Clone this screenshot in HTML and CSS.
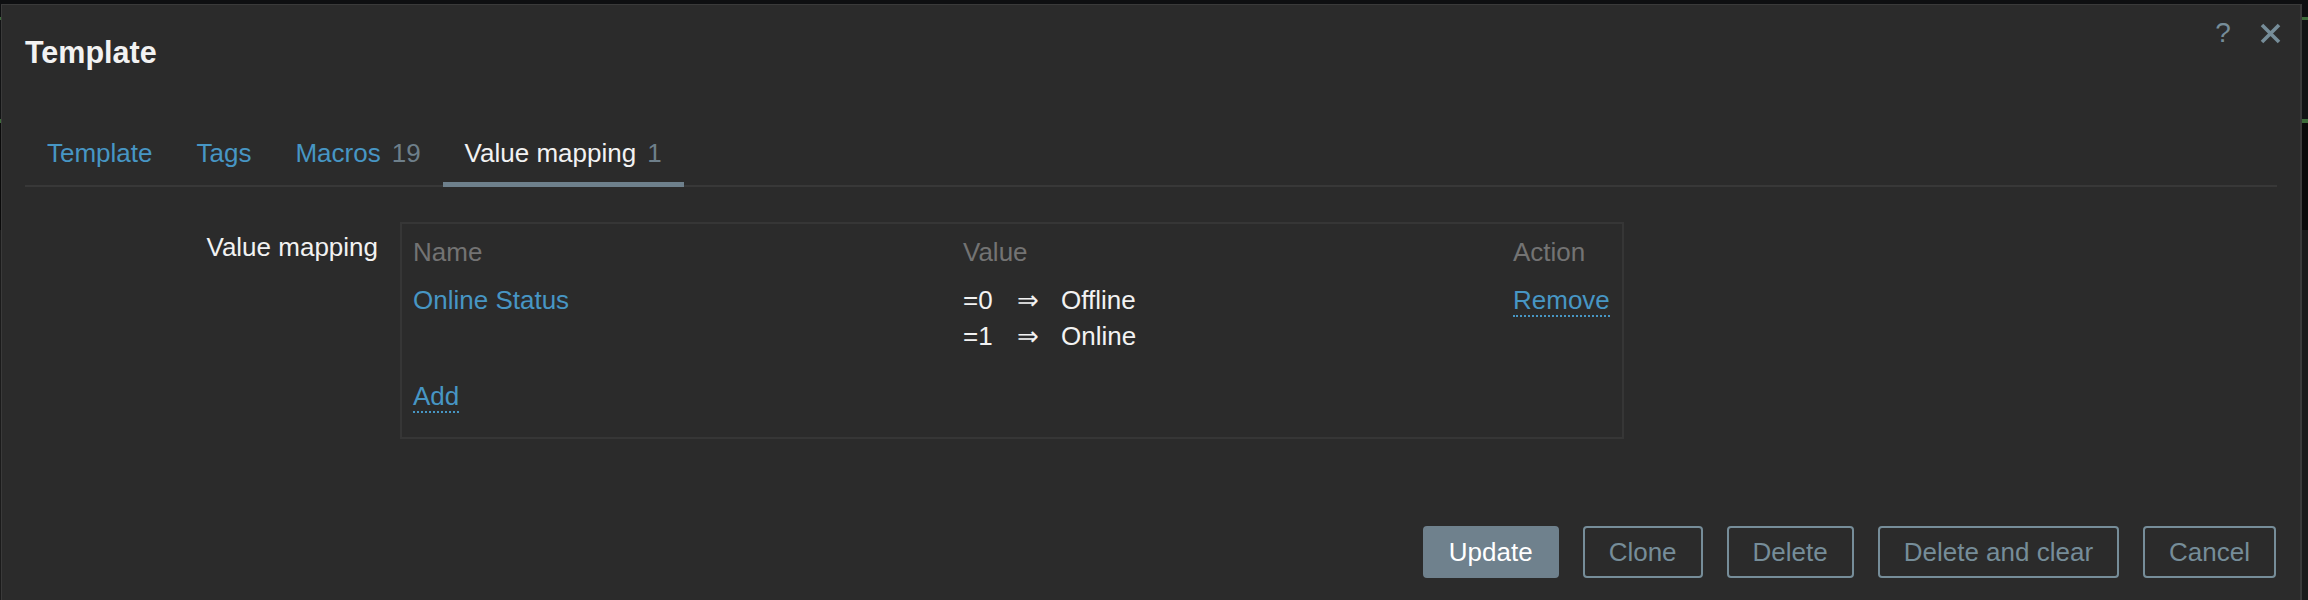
FILE: index.html
```html
<!DOCTYPE html>
<html lang="en">
<head>
<meta charset="utf-8">
<title>Template</title>
<link rel="stylesheet" href="styles.css">
</head>
<body>
<div class="dialog">
  <div class="dialog-header">
    <h1 class="dialog-title">Template</h1>
    <div class="header-buttons">
      <button class="icon-btn help-btn" type="button">?</button>
      <button class="icon-btn close-btn" type="button" aria-label="Close">
        <svg width="21" height="21" viewBox="0 0 21 21"><path d="M2 2 L19 19 M19 2 L2 19" stroke="#768d99" stroke-width="3.6" stroke-linecap="butt" fill="none"/></svg>
      </button>
    </div>
  </div>

  <ul class="tabs">
    <li class="tab"><a href="#">Template</a></li>
    <li class="tab"><a href="#">Tags</a></li>
    <li class="tab"><a href="#">Macros</a><span class="count">19</span></li>
    <li class="tab active"><span class="tab-name">Value mapping</span><span class="count">1</span></li>
  </ul>

  <div class="form-row">
    <label class="form-label">Value mapping</label>
    <div class="mapping-box">
      <div class="mapping-grid">
        <div class="th">Name</div>
        <div class="th">Value</div>
        <div class="th">Action</div>

        <div class="td"><a href="#" class="link">Online Status</a></div>
        <div class="td values">
          <div class="map-line"><span class="map-key">=0</span><span class="arrow">⇒</span><span class="map-val">Offline</span></div>
          <div class="map-line"><span class="map-key">=1</span><span class="arrow">⇒</span><span class="map-val">Online</span></div>
        </div>
        <div class="td"><a href="#" class="link dotted">Remove</a></div>
      </div>
      <div class="add-row"><a href="#" class="link dotted">Add</a></div>
    </div>
  </div>

  <div class="dialog-footer">
    <button class="btn primary" type="button">Update</button>
    <button class="btn alt" type="button">Clone</button>
    <button class="btn alt" type="button">Delete</button>
    <button class="btn alt" type="button">Delete and clear</button>
    <button class="btn alt" type="button">Cancel</button>
  </div>
</div>
</body>
</html>
```

FILE: styles.css
```css
* {
  box-sizing: border-box;
}

html, body {
  margin: 0;
  padding: 0;
  height: 600px;
  overflow: hidden;
}

body {
  font-family: "Liberation Sans", Arial, sans-serif;
  font-size: 26px;
  color: #f2f2f2;
  background: linear-gradient(to bottom,
    #0e0f11 0, #0e0f11 17px,
    #3d6b3a 17px, #3d6b3a 20px,
    #121314 20px, #121314 119px,
    #3d6b3a 119px, #3d6b3a 123px,
    #0a0a0a 123px, #0a0a0a 230px,
    #1b1b1b 230px);
}

.dialog {
  margin: 4px 0 0 1px;
  width: 2301px;
  height: 596px;
  background: #2b2b2b;
  border: 1px solid #3a3a3a;
  border-right-width: 2px;
  border-bottom: 0;
  padding: 0 23px 0 23px;
}

.dialog-header {
  display: flex;
  align-items: flex-start;
  justify-content: space-between;
  padding-top: 13px;
}

.dialog-title {
  margin: 16px 0 0 0;
  font-size: 30.5px;
  line-height: 36px;
  font-weight: bold;
  color: #f2f2f2;
}

.header-buttons {
  display: flex;
  align-items: center;
  gap: 30px;
  height: 30px;
  margin-right: -4px;
}

.icon-btn {
  background: none;
  border: 0;
  padding: 0;
  margin: 0;
  color: #768d99;
  font-family: "Liberation Sans", Arial, sans-serif;
  cursor: pointer;
  display: flex;
  align-items: center;
  justify-content: center;
}

.help-btn {
  font-size: 28px;
  line-height: 30px;
  width: 14px;
}

.close-btn {
  width: 21px;
  height: 21px;
}

.tabs {
  list-style: none;
  margin: 40px 0 0 0;
  padding: 0;
  display: flex;
  border-bottom: 2px solid #383838;
}

.tab {
  padding: 28px 22px 14px 22px;
  line-height: 30px;
  border-bottom: 5px solid transparent;
  margin-bottom: -2px;
  white-space: nowrap;
}

.tab a {
  color: #4796c4;
  text-decoration: none;
}

.tab.active {
  border-bottom-color: #6e808c;
  color: #f2f2f2;
}

.count {
  margin-left: 11px;
  color: #6e7f8a;
}

.form-row {
  display: grid;
  grid-template-columns: 353px auto;
  column-gap: 22px;
  margin-top: 35px;
  align-items: start;
}

.form-label {
  text-align: right;
  line-height: 30px;
  padding-top: 10px;
  color: #f2f2f2;
}

.mapping-box {
  width: 1224px;
  border: 2px solid #363636;
  padding: 13px 11px 26px 11px;
}

.mapping-grid {
  display: grid;
  grid-template-columns: 550px 550px auto;
}

.th {
  color: #737373;
  line-height: 30px;
  margin-bottom: 15px;
}

.td {
  line-height: 36px;
}

.link {
  color: #4796c4;
  text-decoration: none;
}

.link.dotted {
  border-bottom: 2px dotted #4796c4;
}

.map-line {
  display: flex;
}

.map-key {
  width: 54px;
}

.arrow {
  width: 44px;
}

.add-row {
  margin-top: 27px;
  line-height: 30px;
}

.dialog-footer {
  display: flex;
  justify-content: flex-end;
  gap: 24px;
  margin-top: 87px;
  padding-right: 1px;
}

.btn {
  font-family: "Liberation Sans", Arial, sans-serif;
  font-size: 26px;
  height: 52px;
  line-height: 48px;
  padding: 0 24px;
  border-radius: 4px;
  border: 2px solid #768d99;
  background: transparent;
  color: #768d99;
  cursor: pointer;
}

.btn.primary {
  background: #6f818d;
  border-color: #6f818d;
  color: #ffffff;
}
```
